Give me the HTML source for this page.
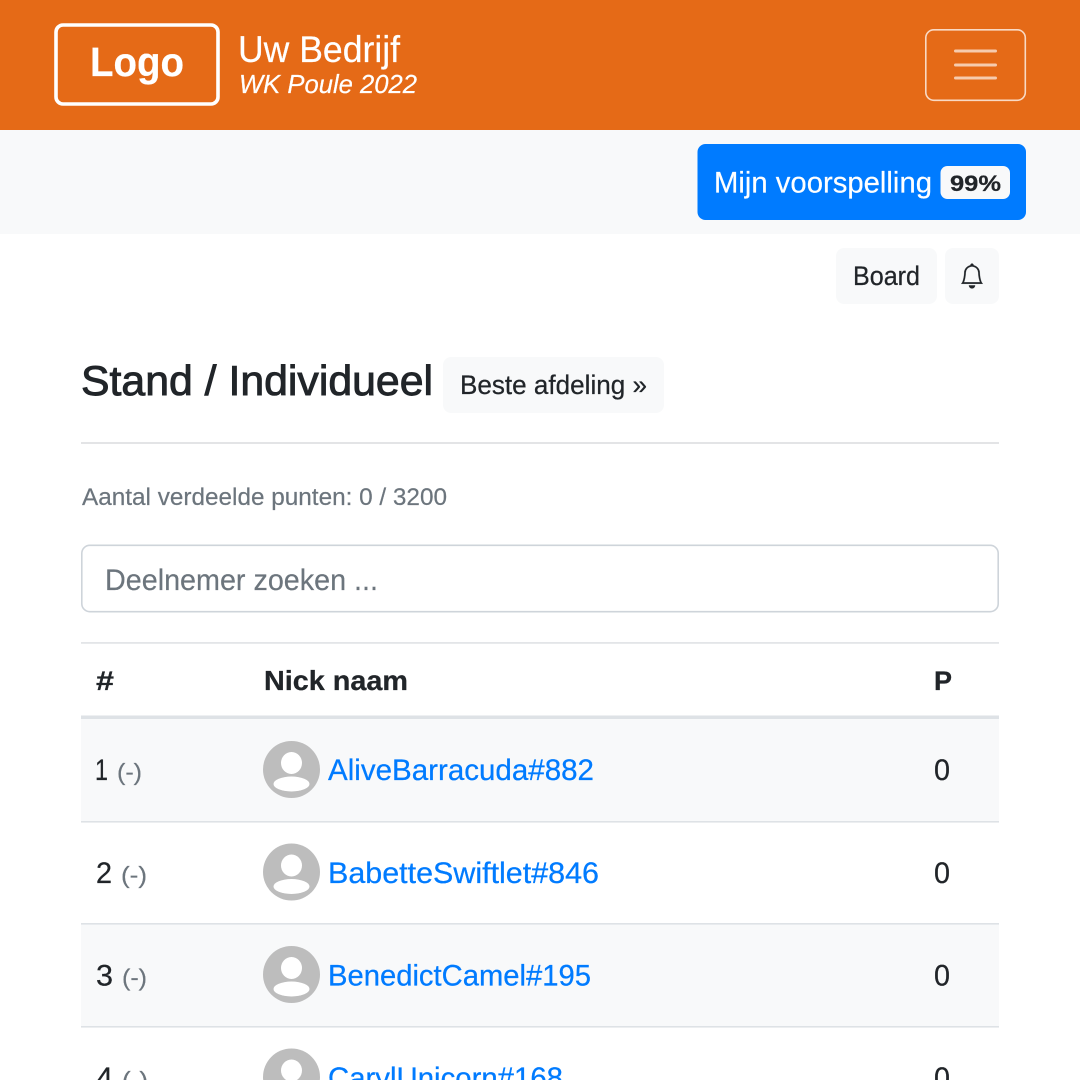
<!DOCTYPE html>
<html lang="nl">
<head>
<meta charset="utf-8">
<title>WK Poule 2022</title>
<style>
html,body{margin:0;padding:0;width:1080px;height:1080px;overflow:hidden;background:#fff}
svg{display:block}
text{font-family:"Liberation Sans",sans-serif;white-space:pre}
.d{fill:#212529;stroke:#212529;stroke-width:.25}.m{fill:#6c757d;stroke:#6c757d;stroke-width:.2}.l{fill:#007bff;stroke:#007bff;stroke-width:.25}.w{fill:#fff;stroke:#fff;stroke-width:.2}.b{font-weight:700}
</style>
</head>
<body>
<svg xmlns="http://www.w3.org/2000/svg" width="1080" height="1080" viewBox="0 0 1080 1080">
<defs>
<g id="av"><circle cx="0" cy="0" r="28.5" fill="#bdbdbd"/><ellipse cx="0" cy="-6.5" rx="10.5" ry="11" fill="#fff"/><ellipse cx="0" cy="14.5" rx="18" ry="7.5" fill="#fff"/></g>
</defs>
<rect width="1080" height="1080" fill="#fff"/>
<rect width="1080" height="130" fill="#e56a17"/>
<rect y="130" width="1080" height="104" fill="#f8f9fa"/>
<rect x="56" y="25" width="162" height="79" rx="7" fill="none" stroke="#fff" stroke-width="3.6"/>
<text x="90" y="76" font-size="41" class="w b" textLength="94" lengthAdjust="spacingAndGlyphs">Logo</text>
<text x="238" y="62" font-size="37" class="w" textLength="162" lengthAdjust="spacingAndGlyphs">Uw Bedrijf</text>
<text x="239" y="93" font-size="26" class="w" font-style="italic" textLength="178" lengthAdjust="spacingAndGlyphs">WK Poule 2022</text>
<rect x="925.8" y="29.8" width="99.5" height="70.5" rx="8" fill="none" stroke="#fff" stroke-opacity=".75" stroke-width="1.6"/>
<path d="M955.5 51H995.5M955.5 65H995.5M955.5 78H995.5" stroke="#fff" stroke-opacity=".65" stroke-width="3" stroke-linecap="round" fill="none"/>
<rect x="697.5" y="144" width="328.5" height="76" rx="8" fill="#007bff"/>
<text x="714" y="192.5" font-size="30" class="w" textLength="218" lengthAdjust="spacingAndGlyphs">Mijn voorspelling</text>
<rect x="940.5" y="166" width="69.5" height="33" rx="7" fill="#f8f9fa"/>
<text x="950" y="191" font-size="22.5" class="d b" textLength="51" lengthAdjust="spacingAndGlyphs">99%</text>
<rect x="836" y="248" width="101" height="56" rx="8" fill="#f8f9fa"/>
<text x="853" y="285" font-size="27" class="d" textLength="67" lengthAdjust="spacingAndGlyphs">Board</text>
<rect x="945" y="248" width="54" height="56" rx="8" fill="#f8f9fa"/>
<path transform="translate(959.5 263.5) scale(1.5625)" fill="#212529" stroke="#212529" stroke-width=".12" d="M8 16a2 2 0 0 0 2-2H6a2 2 0 0 0 2 2zM8 1.918l-.797.161A4.002 4.002 0 0 0 4 6c0 .628-.134 2.197-.459 3.742-.16.767-.376 1.566-.663 2.258h10.244c-.287-.692-.502-1.49-.663-2.258C12.134 8.197 12 6.628 12 6a4.002 4.002 0 0 0-3.203-3.92L8 1.917zM14.22 12c.223.447.481.801.78 1H1c.299-.199.557-.553.78-1C2.68 10.2 3 6.88 3 6c0-2.42 1.72-4.44 4.005-4.901a1 1 0 1 1 1.99 0A5.002 5.002 0 0 1 13 6c0 .88.32 4.2 1.22 6z"/>
<text x="81" y="395" font-size="42" class="d" style="stroke-width:.9" textLength="352" lengthAdjust="spacingAndGlyphs">Stand / Individueel</text>
<rect x="443" y="357" width="221" height="56" rx="8" fill="#f8f9fa"/>
<text x="460" y="394" font-size="27" class="d" textLength="187" lengthAdjust="spacingAndGlyphs">Beste afdeling »</text>
<rect x="81" y="442" width="918" height="2" fill="#e3e4e6"/>
<text x="82" y="505" font-size="24" class="m" textLength="365" lengthAdjust="spacingAndGlyphs">Aantal verdeelde punten: 0 / 3200</text>
<rect x="81.8" y="545.3" width="916.4" height="66.4" rx="8" fill="#fff" stroke="#ced4da" stroke-width="1.6"/>
<text x="105" y="590" font-size="30" class="m" textLength="273" lengthAdjust="spacingAndGlyphs">Deelnemer zoeken ...</text>
<rect x="81" y="642" width="918" height="1.8" fill="#e3e5e8"/>
<text x="96" y="690" font-size="27" class="d b" textLength="18" lengthAdjust="spacingAndGlyphs">#</text>
<text x="264" y="690" font-size="28" class="d b" textLength="144" lengthAdjust="spacingAndGlyphs">Nick naam</text>
<text x="934" y="690" font-size="27" class="d b" textLength="18" lengthAdjust="spacingAndGlyphs">P</text>
<rect x="81" y="719" width="918" height="102" fill="#f8f9fa"/>
<rect x="81" y="924" width="918" height="102" fill="#f8f9fa"/>
<rect x="81" y="715.5" width="918" height="3.5" fill="#dee2e6"/>
<rect x="81" y="821" width="918" height="1.6" fill="#dee2e6"/>
<rect x="81" y="923" width="918" height="1.6" fill="#dee2e6"/>
<rect x="81" y="1026" width="918" height="1.6" fill="#dee2e6"/>
<text x="95" y="780" font-size="30" class="d" textLength="13" lengthAdjust="spacingAndGlyphs">1</text>
<text x="117" y="780" font-size="23" class="m" textLength="25" lengthAdjust="spacingAndGlyphs">(-)</text>
<use href="#av" x="291.5" y="769.5"/>
<text x="328" y="780" font-size="30" class="l" textLength="266" lengthAdjust="spacingAndGlyphs">AliveBarracuda#882</text>
<text x="934" y="780" font-size="30" class="d" textLength="16" lengthAdjust="spacingAndGlyphs">0</text>
<text x="96" y="883" font-size="30" class="d" textLength="16" lengthAdjust="spacingAndGlyphs">2</text>
<text x="121" y="883" font-size="23" class="m" textLength="26" lengthAdjust="spacingAndGlyphs">(-)</text>
<use href="#av" x="291.5" y="872"/>
<text x="328" y="883" font-size="30" class="l" textLength="271" lengthAdjust="spacingAndGlyphs">BabetteSwiftlet#846</text>
<text x="934" y="883" font-size="30" class="d" textLength="16" lengthAdjust="spacingAndGlyphs">0</text>
<text x="96" y="985.5" font-size="30" class="d" textLength="17" lengthAdjust="spacingAndGlyphs">3</text>
<text x="122" y="985.5" font-size="23" class="m" textLength="25" lengthAdjust="spacingAndGlyphs">(-)</text>
<use href="#av" x="291.5" y="974.5"/>
<text x="328" y="985.5" font-size="30" class="l" textLength="263" lengthAdjust="spacingAndGlyphs">BenedictCamel#195</text>
<text x="934" y="985.5" font-size="30" class="d" textLength="16" lengthAdjust="spacingAndGlyphs">0</text>
<text x="96" y="1088" font-size="30" class="d" textLength="17" lengthAdjust="spacingAndGlyphs">4</text>
<text x="122" y="1088" font-size="23" class="m" textLength="26" lengthAdjust="spacingAndGlyphs">(-)</text>
<use href="#av" x="291.5" y="1077"/>
<text x="328" y="1088" font-size="30" class="l" textLength="235" lengthAdjust="spacingAndGlyphs">CarylUnicorn#168</text>
<text x="934" y="1088" font-size="30" class="d" textLength="16" lengthAdjust="spacingAndGlyphs">0</text>
</svg>
</body>
</html>
